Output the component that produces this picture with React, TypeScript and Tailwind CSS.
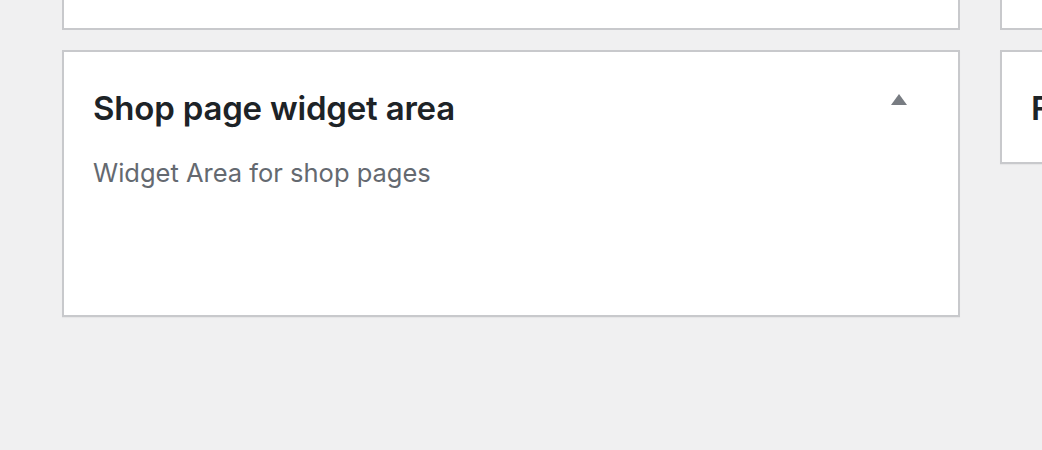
import React from 'react';

const font = { fontFamily: 'Inter, "Noto Sans", sans-serif' };

interface AreaProps {
  title: string;
  description?: string;
  height: string;
  open?: boolean;
}

const WidgetArea: React.FC<AreaProps> = ({ title, description, height, open }) => (
  <div className={`bg-white border-2 border-[#c8c9cc] shadow-[0_1px_1px_rgba(0,0,0,0.04)] ${height}`}>
    <div className="flex items-start justify-between pl-[29px] pr-[51px] pt-[36px]">
      <h2 className="text-[33px] leading-[40px] font-semibold text-[#1d2327] tracking-[-0.2px] whitespace-nowrap">
        {title}
      </h2>
      {open && (
        <svg width="16" height="12" viewBox="0 0 16 12" className="mt-[6px] shrink-0">
          <path d="M8 0 L16 11 L0 11 Z" fill="#787c82" />
        </svg>
      )}
    </div>
    {description && (
      <p className="pl-[29px] mt-[30px] text-[25.5px] leading-[30px] text-[#646970] whitespace-nowrap">
        {description}
      </p>
    )}
  </div>
);

const App: React.FC = () => {
  return (
    <div className="w-[1042px] h-[450px] bg-[#f0f0f1] overflow-hidden" style={font}>
      <div className="flex gap-[40px] pl-[62px]">
        <div className="w-[898px] shrink-0 flex flex-col gap-[20px]">
          <div className="h-[30px] bg-white border-2 border-t-0 border-[#c8c9cc]" />
          <WidgetArea
            title="Shop page widget area"
            description="Widget Area for shop pages"
            height="h-[267px]"
            open
          />
        </div>
        <div className="w-[898px] shrink-0 flex flex-col gap-[20px]">
          <div className="h-[30px] bg-white border-2 border-t-0 border-[#c8c9cc]" />
          <WidgetArea title="Footer widget area" height="h-[114px]" />
        </div>
      </div>
    </div>
  );
};

export default App;
